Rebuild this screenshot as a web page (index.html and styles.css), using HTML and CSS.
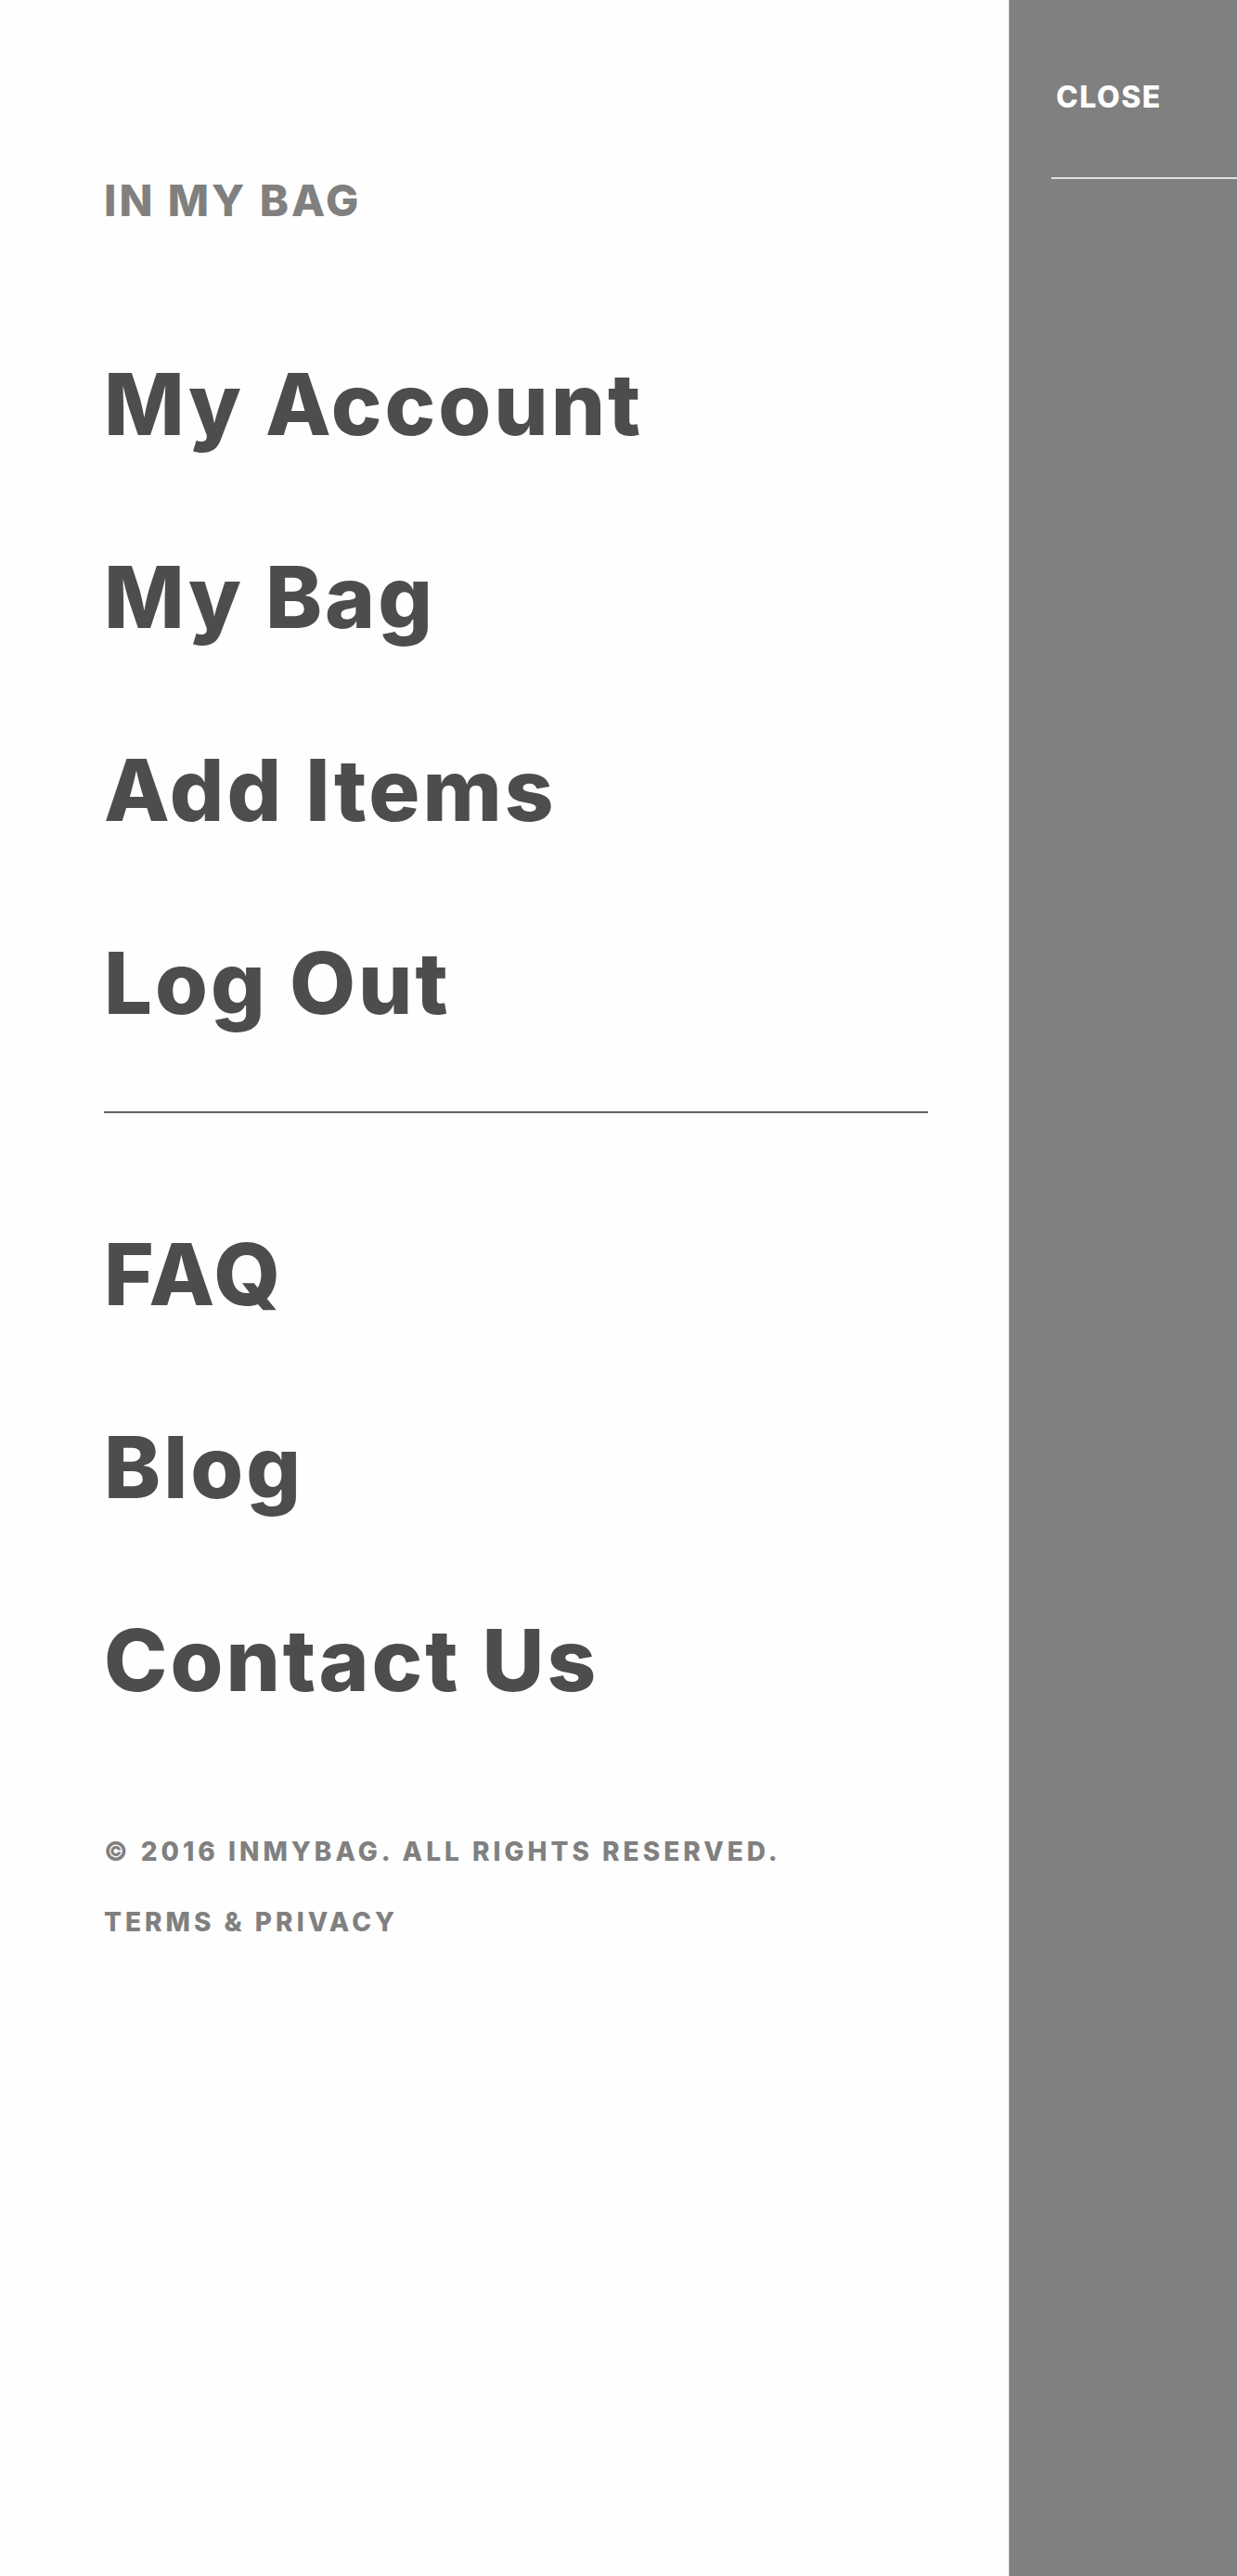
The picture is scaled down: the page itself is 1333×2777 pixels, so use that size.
FILE: index.html
```html
<!DOCTYPE html>
<html lang="en">
<head>
<meta charset="utf-8">
<title>In My Bag — Menu</title>
<link rel="stylesheet" href="styles.css">
</head>
<body>
<div class="layout">
  <main class="menu">
    <div class="brand">IN MY BAG</div>
    <nav class="nav">
      <a class="nav-link" href="#">My Account</a>
      <a class="nav-link" href="#">My Bag</a>
      <a class="nav-link" href="#">Add Items</a>
      <a class="nav-link" href="#">Log Out</a>
    </nav>
    <hr class="divider">
    <nav class="nav nav-secondary">
      <a class="nav-link" href="#">FAQ</a>
      <a class="nav-link" href="#">Blog</a>
      <a class="nav-link" href="#">Contact Us</a>
    </nav>
    <footer class="legal">
      <p class="legal-line">© 2016 INMYBAG. ALL RIGHTS RESERVED.</p>
      <a class="legal-line" href="#">TERMS &amp; PRIVACY</a>
    </footer>
  </main>
  <aside class="side">
    <button class="close" type="button">CLOSE</button>
    <div class="side-rule"></div>
  </aside>
</div>
</body>
</html>
```
FILE: styles.css
```css
html, body {
  margin: 0;
  padding: 0;
}
body {
  font-family: Inter, "Noto Sans", "DejaVu Sans", sans-serif;
  background: #ffffff;
}
.layout {
  display: flex;
  min-height: 2777px;
}
.menu {
  width: 1087px;
  box-sizing: border-box;
  padding: 186px 87px 0 112px;
  background: #fefefe;
  display: flex;
  flex-direction: column;
}
.brand {
  font-size: 47px;
  line-height: 60px;
  font-weight: 800;
  color: #808080;
  letter-spacing: 3px;
  margin-bottom: 86px;
}
.nav {
  display: flex;
  flex-direction: column;
}
.nav-link {
  display: block;
  font-size: 92px;
  line-height: 208px;
  height: 208px;
  font-weight: 800;
  color: #4d4d4d;
  text-decoration: none;
  letter-spacing: 3px;
  white-space: nowrap;
}
.divider {
  margin: 34px 0 0 0;
  border: 0;
  height: 2px;
  background: #616161;
}
.nav-secondary {
  margin-top: 70px;
}
.legal {
  margin-top: 64px;
  display: flex;
  flex-direction: column;
}
.legal-line {
  margin: 0;
  display: block;
  font-size: 28px;
  line-height: 76px;
  font-weight: 800;
  color: #808080;
  text-decoration: none;
  letter-spacing: 4px;
  white-space: nowrap;
}
.side {
  flex: 1;
  background: #808080;
  border-left: 1px solid #a8a8a8;
  padding: 85px 0 0 45px;
  display: flex;
  flex-direction: column;
  align-items: stretch;
}
.close {
  align-self: flex-start;
  background: none;
  border: 0;
  padding: 0 0 0 5px;
  margin: 0;
  font-family: inherit;
  font-size: 32px;
  line-height: 40px;
  font-weight: 800;
  color: #ffffff;
  letter-spacing: 1.5px;
  cursor: pointer;
}
.side-rule {
  margin-top: 66px;
  height: 2px;
  background: #e2e2e2;
}
```
